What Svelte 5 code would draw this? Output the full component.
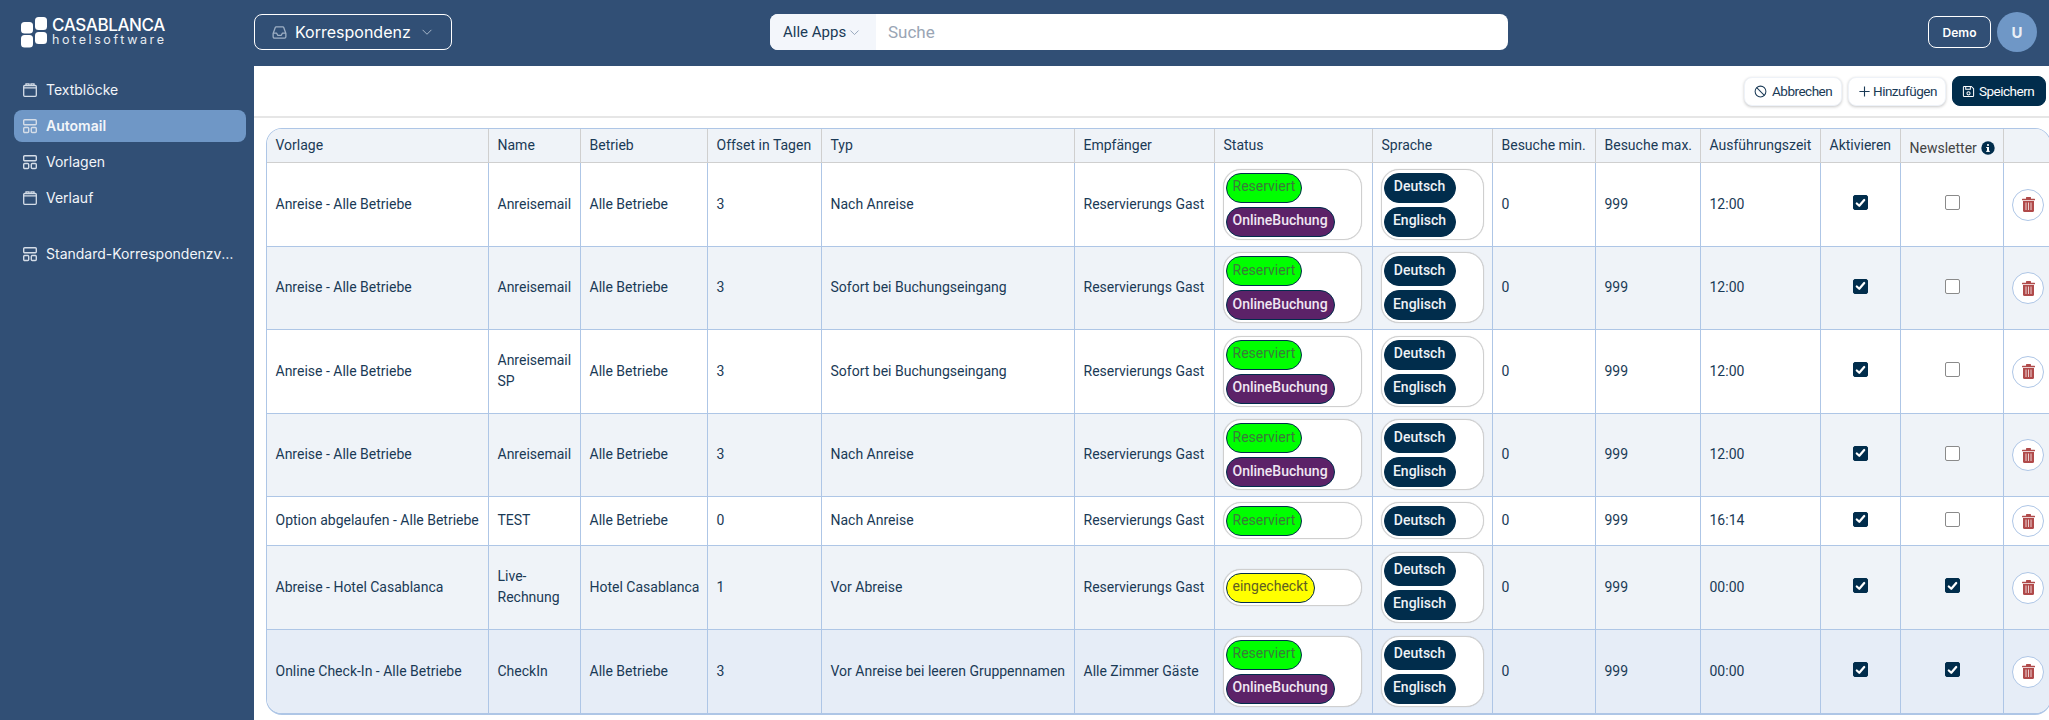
<script lang="ts">
  const columns = [
    ["Vorlage", 222], ["Name", 92], ["Betrieb", 127], ["Offset in Tagen", 114], ["Typ", 253],
    ["Empfänger", 140], ["Status", 158], ["Sprache", 120], ["Besuche min.", 103], ["Besuche max.", 105],
    ["Ausführungszeit", 120], ["Aktivieren", 80], ["Newsletter", 103], ["", 46],
  ];

  const nav = [
    { label: "Textblöcke", icon: "cal" },
    { label: "Automail", icon: "tpl", active: true },
    { label: "Vorlagen", icon: "tpl" },
    { label: "Verlauf", icon: "cal" },
    { label: "Standard-Korrespondenzvorlagen", icon: "tpl", gap: true },
  ];

  const both = ["Reserviert", "OnlineBuchung"];
  const langs = ["Deutsch", "Englisch"];

  const rows = [
    { vorlage: "Anreise - Alle Betriebe", name: "Anreisemail", betrieb: "Alle Betriebe", offset: 3, typ: "Nach Anreise", to: "Reservierungs Gast", status: both, lang: langs, time: "12:00", on: true, news: false, h: 84 },
    { vorlage: "Anreise - Alle Betriebe", name: "Anreisemail", betrieb: "Alle Betriebe", offset: 3, typ: "Sofort bei Buchungseingang", to: "Reservierungs Gast", status: both, lang: langs, time: "12:00", on: true, news: false, h: 83 },
    { vorlage: "Anreise - Alle Betriebe", name: "Anreisemail SP", betrieb: "Alle Betriebe", offset: 3, typ: "Sofort bei Buchungseingang", to: "Reservierungs Gast", status: both, lang: langs, time: "12:00", on: true, news: false, h: 84 },
    { vorlage: "Anreise - Alle Betriebe", name: "Anreisemail", betrieb: "Alle Betriebe", offset: 3, typ: "Nach Anreise", to: "Reservierungs Gast", status: both, lang: langs, time: "12:00", on: true, news: false, h: 83 },
    { vorlage: "Option abgelaufen - Alle Betriebe", name: "TEST", betrieb: "Alle Betriebe", offset: 0, typ: "Nach Anreise", to: "Reservierungs Gast", status: ["Reserviert"], lang: ["Deutsch"], time: "16:14", on: true, news: false, h: 49 },
    { vorlage: "Abreise - Hotel Casablanca", name: "Live-Rechnung", betrieb: "Hotel Casablanca", offset: 1, typ: "Vor Abreise", to: "Reservierungs Gast", status: ["eingecheckt"], lang: langs, time: "00:00", on: true, news: true, h: 84 },
    { vorlage: "Online Check-In - Alle Betriebe", name: "CheckIn", betrieb: "Alle Betriebe", offset: 3, typ: "Vor Anreise bei leeren Gruppennamen", to: "Alle Zimmer Gäste", status: both, lang: langs, time: "00:00", on: true, news: true, h: 83 },
  ];

  const chipClass: Record<string, string> = {
    Reserviert: "green",
    OnlineBuchung: "purple",
    eingecheckt: "yellow",
  };
</script>

{#snippet chevron(size)}
  <svg width={size} height={size} viewBox="0 0 16 16" fill="none" stroke="currentColor" stroke-width="1.3" stroke-linecap="round" stroke-linejoin="round"><path d="M2.5 5.5 8 11l5.5-5.5" /></svg>
{/snippet}

{#snippet tick()}
  <svg width="14" height="14" viewBox="0 0 14 14" fill="none" stroke="#fff" stroke-width="2.400" stroke-linecap="round" stroke-linejoin="round"><path d="M3 7.500 5.700 10 11 3.800" /></svg>
{/snippet}

<div class="page">
  <header class="top">
    <div class="logo">
      <svg width="26" height="31" viewBox="0 0 26 31" fill="#fff">
        <rect x="0" y="5" width="12" height="11.500" rx="3.500" />
        <rect x="14" y="0" width="12" height="13" rx="3.500" />
        <rect x="0" y="18" width="12" height="12.500" rx="3.500" />
        <rect x="14" y="15" width="12" height="12" rx="3.500" />
      </svg>
      <div class="wordmark">
        <div class="w1">CASABLANCA</div>
        <div class="w2">hotelsoftware</div>
      </div>
    </div>
    <button class="module">
      <svg width="17" height="17" viewBox="0 0 24 24" fill="none" stroke="#9fb0c5" stroke-width="1.800" stroke-linejoin="round"><path d="M3 13.500 6 5a1.500 1.500 0 0 1 1.400-1h9.200A1.500 1.500 0 0 1 18 5l3 8.500V18a2 2 0 0 1-2 2H5a2 2 0 0 1-2-2z" /><path d="M3 13h5l1.500 3h5l1.500-3h5" /></svg>
      <span>Korrespondenz</span>
      <span class="chev">{@render chevron(12)}</span>
    </button>
    <div class="search">
      <div class="scope">Alle Apps <span class="scope-chev">{@render chevron(11)}</span></div>
      <div class="placeholder">Suche</div>
    </div>
    <div class="spacer"></div>
    <button class="demo">Demo</button>
    <div class="avatar">U</div>
  </header>

  <div class="body">
    <nav class="side">
      {#each nav as item}
        <div class="item" class:active={item.active} class:gap={item.gap}>
          {#if item.icon === "cal"}
            <svg class="ico" width="16" height="16" viewBox="0 0 16 16" fill="none" stroke="#d5dde8" stroke-width="1.300"><rect x="1.700" y="3.500" width="12.600" height="10.800" rx="1" /><path d="M1.700 5.800h12.600M4 3.500V1.800h3v1.700M9 3.500V1.800h3v1.700" /></svg>
          {:else}
            <svg class="ico" width="16" height="16" viewBox="0 0 16 16" fill="none" stroke="#d5dde8" stroke-width="1.400"><rect x="1.700" y="1.700" width="12.600" height="5" rx="1" /><rect x="1.700" y="9.500" width="5" height="5" rx="1" /><rect x="9.300" y="9.500" width="5" height="5" rx="1" /></svg>
          {/if}
          <span class="lbl">{item.label}</span>
        </div>
      {/each}
    </nav>

    <main class="main">
      <div class="toolbar">
        <button class="tool">
          <svg width="13" height="13" viewBox="0 0 14 14" fill="none" stroke="#1a3a56" stroke-width="1.100"><circle cx="7" cy="7" r="5.800" /><path d="M2.900 2.900l8.200 8.200" /></svg>
          Abbrechen
        </button>
        <button class="tool plus">
          <svg width="13" height="13" viewBox="0 0 14 14" fill="none" stroke="#1a3a56" stroke-width="1.200"><path d="M7 1.500v11M1.500 7h11" /></svg>
          Hinzufügen
        </button>
        <button class="tool save">
          <svg width="13" height="13" viewBox="0 0 14 14" fill="none" stroke="#fff" stroke-width="1.100"><path d="M1.500 2.500a1 1 0 0 1 1-1h7.500l2.500 2.500v7.500a1 1 0 0 1-1 1h-9a1 1 0 0 1-1-1z" /><path d="M4 1.500v3h5v-3" /><circle cx="7" cy="9" r="1.700" /></svg>
          Speichern
        </button>
      </div>

      <div class="wrap">
        <table>
          <colgroup>
            {#each columns as col}<col style="width:{col[1]}px" />{/each}
          </colgroup>
          <thead>
            <tr>
              {#each columns as col}
                <th class:news={col[0] === "Newsletter"}>
                  {col[0]}
                  {#if col[0] === "Newsletter"}
                    <svg class="info" width="14" height="14" viewBox="0 0 14 14"><circle cx="7" cy="7" r="6.700" fill="#012d4c" /><rect x="6" y="6" width="2" height="4.500" fill="#fff" /><rect x="5.200" y="9.800" width="3.600" height="1.100" fill="#fff" /><rect x="5.200" y="6" width="2" height="1" fill="#fff" /><circle cx="7" cy="4" r="1.100" fill="#fff" /></svg>
                  {/if}
                </th>
              {/each}
            </tr>
          </thead>
          <tbody>
            {#each rows as r, i}
              <tr class:alt={i % 2 === 1} class:last={i === rows.length - 1} style="height:{r.h}px">
                <td>{r.vorlage}</td>
                <td>{r.name}</td>
                <td>{r.betrieb}</td>
                <td>{r.offset}</td>
                <td>{r.typ}</td>
                <td>{r.to}</td>
                <td>
                  <div class="box status">
                    {#each r.status as s}<span class="chip {chipClass[s]}">{s}</span>{/each}
                  </div>
                </td>
                <td>
                  <div class="box lang">
                    {#each r.lang as l}<span class="chip dark">{l}</span>{/each}
                  </div>
                </td>
                <td>0</td>
                <td>999</td>
                <td>{r.time}</td>
                <td class="mid">
                  <span class="check" class:on={r.on}>{#if r.on}{@render tick()}{/if}</span>
                </td>
                <td class="mid">
                  <span class="check" class:on={r.news}>{#if r.news}{@render tick()}{/if}</span>
                </td>
                <td class="act">
                  <span class="trash">
                    <svg width="13" height="15" viewBox="0 0 13 15" fill="#b04a4a"><rect x="0" y="1.700" width="13" height="1.600" rx=".5" /><rect x="4" y="0" width="5" height="2" rx=".6" /><path d="M1 4h11v9.500a1.500 1.500 0 0 1-1.500 1.500h-8A1.500 1.500 0 0 1 1 13.500z" /><path d="M4 5.500v7.500M6.500 5.500v7.500M9 5.500v7.500" stroke="#fff" stroke-width="1" opacity=".75" /></svg>
                  </span>
                </td>
              </tr>
            {/each}
          </tbody>
        </table>
      </div>
    </main>
  </div>
</div>

<style>
  :global(body) {
    margin: 0;
    background: #fff;
  }
  .page {
    width: 2049px;
    height: 720px;
    overflow: hidden;
    display: flex;
    flex-direction: column;
    font-family: Roboto, "Liberation Sans", sans-serif;
    color: #1a3a56;
  }
  button {
    font: inherit;
    cursor: pointer;
  }

  .top {
    height: 66px;
    flex: none;
    box-sizing: border-box;
    padding-bottom: 2px;
    display: flex;
    align-items: center;
    background: #314f75;
    color: #fff;
  }
  .logo {
    width: 254px;
    flex: none;
    display: flex;
    align-items: center;
    gap: 5px;
    padding-left: 21px;
    box-sizing: border-box;
  }
  .wordmark {
    font-family: Inter, sans-serif;
    line-height: 1;
  }
  .w1 {
    font-size: 17px;
    font-weight: 500;
    letter-spacing: -0.4px;
    height: 17px;
  }
  .w2 {
    font-size: 12.500px;
    letter-spacing: 2.600px;
    font-weight: 400;
    color: #e6ebf1;
  }
  .module {
    width: 198px;
    height: 36px;
    flex: none;
    display: flex;
    align-items: center;
    padding: 0 16px;
    gap: 7px;
    background: transparent;
    color: #fff;
    border: 1px solid #fff;
    border-radius: 8px;
    box-sizing: border-box;
    font-family: Inter, sans-serif;
    font-size: 16px;
    font-weight: 400;
  }
  .chev {
    display: flex;
    color: #a9b8ca;
    margin-left: 3px;
  }
  .search {
    width: 738px;
    height: 36px;
    flex: none;
    margin-left: 318px;
    display: flex;
    background: #fff;
    border-radius: 8px;
    overflow: hidden;
  }
  .scope {
    width: 106px;
    flex: none;
    box-sizing: border-box;
    padding-left: 13px;
    display: flex;
    align-items: center;
    gap: 3px;
    background: #f3f6fb;
    color: #1a3a56;
    font-size: 15px;
  }
  .scope-chev {
    display: flex;
    color: #8fa0b5;
  }
  .placeholder {
    display: flex;
    align-items: center;
    padding-left: 12px;
    color: #9aa5b4;
    font-size: 17px;
  }
  .spacer {
    flex: 1;
  }
  .demo {
    width: 63px;
    height: 32px;
    border: 1px solid #fff;
    border-radius: 8px;
    background: transparent;
    color: #fff;
    font-family: Inter, sans-serif;
    font-size: 12px;
    font-weight: 600;
    padding: 0;
  }
  .avatar {
    width: 40px;
    height: 40px;
    margin: 0 12px 0 6px;
    border-radius: 50%;
    background: #6f97c6;
    display: flex;
    align-items: center;
    justify-content: center;
    font-size: 15px;
    font-weight: 700;
    color: #e9eff6;
    font-family: Inter, sans-serif;
  }

  .body {
    flex: 1;
    display: flex;
    min-height: 0;
  }
  .side {
    width: 254px;
    flex: none;
    box-sizing: border-box;
    padding: 8px 8px 0 14px;
    background: #314f75;
    display: flex;
    flex-direction: column;
    gap: 4px;
    color: #f2f5f9;
    font-family: Inter, sans-serif;
    font-size: 14px;
  }
  .item {
    height: 32px;
    display: flex;
    align-items: center;
    gap: 8px;
    padding-left: 8px;
    border-radius: 8px;
    min-width: 0;
  }
  .item.gap {
    margin-top: 20px;
  }
  .item.active {
    background: #6f97c6;
    font-weight: 600;
  }
  .ico {
    flex: none;
  }
  .lbl {
    white-space: nowrap;
    overflow: hidden;
    text-overflow: ellipsis;
    padding: 0 8px 2px 0;
  }

  .main {
    flex: 1;
    min-width: 0;
    background: #fff;
  }
  .toolbar {
    height: 52px;
    box-sizing: border-box;
    display: flex;
    align-items: center;
    justify-content: flex-end;
    gap: 6px;
    padding: 0 3px 0 0;
    border-bottom: 2px solid #e6e6e6;
    background: #fff;
  }
  .tool {
    width: 98px;
    height: 29px;
    box-sizing: border-box;
    padding: 0 0 0 9px;
    display: flex;
    align-items: center;
    gap: 5px;
    border: 1px solid #eef2f8;
    border-radius: 8px;
    background: #fff;
    color: #1a3a56;
    font-size: 13.500px;
    letter-spacing: -0.500px;
    box-shadow: 0 1px 3px rgba(0, 0, 0, 0.22);
    white-space: nowrap;
  }
  .tool.plus {
    gap: 2px;
  }
  .tool.save {
    width: 94px;
    height: 30px;
    gap: 4px;
    background: #012d4c;
    color: #fff;
    border-color: #012d4c;
    box-shadow: none;
  }

  .wrap {
    padding: 10px 0 0 12px;
  }
  table {
    width: 1783px;
    table-layout: fixed;
    border-collapse: separate;
    border-spacing: 0;
    border: 1px solid #aec6e6;
    border-bottom-width: 2px;
    border-radius: 16px;
    overflow: hidden;
    font-size: 14px;
    color: #1a3a56;
  }
  th {
    height: 34px;
    padding: 0 4px 2px 8.500px;
    text-align: left;
    font-weight: 400;
    background: #eff3f8;
    border-right: 1px solid #cfcfcf;
    border-bottom: 1px solid #cfcfcf;
    white-space: nowrap;
    box-sizing: border-box;
  }
  th.news {
    color: #444;
    padding-top: 5px;
    padding-bottom: 0;
  }
  .info {
    vertical-align: -2px;
    margin-left: 1px;
  }
  td {
    padding: 0 4px 1px 8.500px;
    border-right: 1px solid #aec6e6;
    border-bottom: 1px solid #aec6e6;
    background: #fff;
    box-sizing: border-box;
    line-height: 21px;
  }
  th:last-child,
  td:last-child {
    border-right: none;
  }
  tr.alt td {
    background: #eff3f8;
  }
  tr.last td {
    background: #e6edf7;
    border-bottom: none;
  }
  .box {
    box-sizing: border-box;
    display: flex;
    flex-direction: column;
    align-items: flex-start;
    gap: 4px;
    margin-left: -1px;
    padding: 3px 2px 2px;
    background: #fff;
    border: 1px solid #cfcfcf;
    border-radius: 18px;
    box-shadow: 0 0 1px rgba(0, 0, 0, 0.2);
  }
  .box.lang {
    width: 103px;
  }
  .box.status {
    width: 139px;
  }
  .chip {
    height: 30px;
    box-sizing: border-box;
    display: flex;
    align-items: center;
    justify-content: center;
    padding: 0 6px 2px;
    border-radius: 15px;
    border: 1px solid #012d4c;
    font-size: 14px;
    white-space: nowrap;
  }
  .green {
    background: #00ff00;
    color: #3b7a3b;
  }
  .yellow {
    background: #ffff00;
    color: #5e5e22;
  }
  .purple {
    background: #5c2268;
    color: #f0e6f2;
    font-weight: 500;
  }
  .dark {
    background: #012d4c;
    color: #eef2f6;
    font-weight: 500;
    min-width: 72px;
  }
  .mid {
    padding: 0;
  }
  .check {
    display: flex;
    align-items: center;
    justify-content: center;
    width: 15px;
    height: 15px;
    box-sizing: border-box;
    margin: -4px auto 0;
    border: 1px solid #8a8a8a;
    border-radius: 2px;
    background: #fff;
  }
  .check.on {
    background: #012d4c;
    border-color: #012d4c;
  }
  .act {
    padding: 0 0 0 8px;
  }
  .trash {
    width: 32px;
    height: 32px;
    box-sizing: border-box;
    display: flex;
    align-items: center;
    justify-content: center;
    border-radius: 50%;
    border: 1px solid #aec6e6;
    background: #fff;
  }
</style>
